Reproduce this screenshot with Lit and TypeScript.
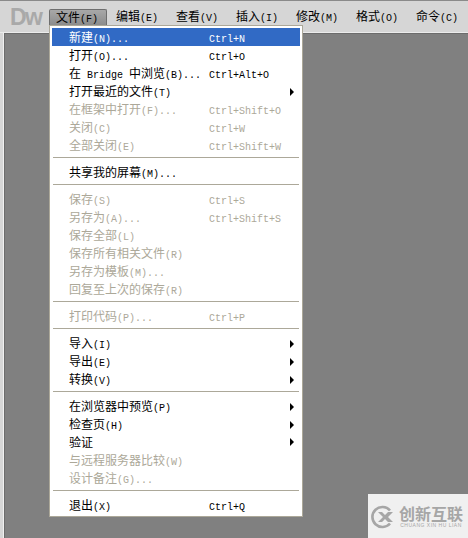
import { LitElement, html, css } from "lit";
import { customElement } from "lit/decorators.js";

type Row = { t: string; k?: string; dis?: boolean; sub?: boolean; on?: boolean } | "sep";

const ROWS: Row[] = [
  { t: "新建(N)...", k: "Ctrl+N", on: true },
  { t: "打开(O)...", k: "Ctrl+O" },
  { t: "在 Bridge 中浏览(B)...", k: "Ctrl+Alt+O" },
  { t: "打开最近的文件(T)", sub: true },
  { t: "在框架中打开(F)...", k: "Ctrl+Shift+O", dis: true },
  { t: "关闭(C)", k: "Ctrl+W", dis: true },
  { t: "全部关闭(E)", k: "Ctrl+Shift+W", dis: true },
  "sep",
  { t: "共享我的屏幕(M)..." },
  "sep",
  { t: "保存(S)", k: "Ctrl+S", dis: true },
  { t: "另存为(A)...", k: "Ctrl+Shift+S", dis: true },
  { t: "保存全部(L)", dis: true },
  { t: "保存所有相关文件(R)", dis: true },
  { t: "另存为模板(M)...", dis: true },
  { t: "回复至上次的保存(R)", dis: true },
  "sep",
  { t: "打印代码(P)...", k: "Ctrl+P", dis: true },
  "sep",
  { t: "导入(I)", sub: true },
  { t: "导出(E)", sub: true },
  { t: "转换(V)", sub: true },
  "sep",
  { t: "在浏览器中预览(P)", sub: true },
  { t: "检查页(H)", sub: true },
  { t: "验证", sub: true },
  { t: "与远程服务器比较(W)", dis: true },
  { t: "设计备注(G)...", dis: true },
  "sep",
  { t: "退出(X)", k: "Ctrl+Q" },
];

const BAR = ["文件(F)", "编辑(E)", "查看(V)", "插入(I)", "修改(M)", "格式(O)", "命令(C)"];

function rich(s: string) {
  return s.split(/([\x20-\x7e]+)/).filter(Boolean).map((p) =>
    /^[\x20-\x7e]/.test(p) ? html`<span class="lat">${p}</span>` : p
  );
}

@customElement("app-root")
export class AppRoot extends LitElement {
  static styles = css`
    :host {
      display: block;
      width: 468px;
      height: 538px;
      overflow: hidden;
      position: relative;
      background: #808080;
      font-family: "Noto Sans CJK SC", sans-serif;
      font-size: 12px;
      color: #000;
    }
    .lat {
      font-family: "Liberation Mono", monospace;
      font-size: 10px;
      white-space: pre;
    }
    .bar {
      height: 33px;
      box-sizing: border-box;
      background: #d6d6d6;
      border-top: 1px solid #8a8a8a;
      border-bottom: 1px solid #ececec;
      display: flex;
      padding-top: 8px;
    }
    .logo {
      width: 49px;
      height: 17px;
      line-height: 17px;
      padding-left: 10px;
      box-sizing: border-box;
      font-family: "Liberation Sans", sans-serif;
      font-weight: 700;
      font-size: 23px;
      letter-spacing: -1.5px;
      color: #a9a9a9;
      flex: none;
    }
    .bar-item {
      flex: none;
      width: 60px;
      height: 16px;
      line-height: 13px;
      padding-left: 7px;
      box-sizing: border-box;
      white-space: nowrap;
    }
    .bar-item.active {
      width: 58px;
      margin-right: 2px;
      height: 16px;
      background: linear-gradient(#a8a8a8, #8c8c8c);
      border: 1px solid #6e6e6e;
      border-bottom: none;
      padding-left: 6px;
      border-radius: 2px 2px 0 0;
    }
    .main {
      height: 505px;
      display: flex;
    }
    .strip {
      flex: none;
      width: 4px;
      box-sizing: border-box;
      background: #d6d6d6;
      border-right: 1px solid #f0f0f0;
    }
    .content {
      flex: 1;
      background: #808080;
      border-top: 1px solid #6c6c6c;
      border-left: 1px solid #6c6c6c;
    }
    .menu {
      position: absolute;
      left: 49px;
      top: 25px;
      width: 254px;
      height: 492px;
      box-sizing: border-box;
      background: #fff;
      border: 1px solid #aca899;
      padding: 2px;
    }
    .row {
      height: 18px;
      line-height: 17px;
      display: grid;
      grid-template-columns: 17px 140px 81px 1fr;
      white-space: nowrap;
    }
    .row .label {
      grid-column: 2;
    }
    .row.on {
      background: #316ac5;
      color: #fff;
    }
    .row.dis {
      color: #aca899;
    }
    .key {
      grid-column: 3;
    }
    .arrow {
      grid-column: 4;
      align-self: center;
      justify-self: start;
      width: 0;
      height: 0;
      margin-top: -1px;
      border-left: 4px solid #000;
      border-top: 4px solid transparent;
      border-bottom: 4px solid transparent;
    }
    .sep {
      height: 9px;
      padding: 3px 1px 0;
      box-sizing: border-box;
    }
    .sep div {
      height: 1px;
      background: #aca899;
    }
    .mark {
      position: absolute;
      left: 368px;
      top: 494px;
      width: 100px;
      height: 44px;
      background: rgba(245, 245, 245, 0.95);
      display: flex;
      align-items: center;
      gap: 4px;
      padding: 2px 0 0 3px;
      box-sizing: border-box;
      color: #a6a6a6;
    }
    .mark svg {
      flex: none;
    }
    .mark-text {
      display: flex;
      flex-direction: column;
      align-items: center;
      gap: 2px;
      font-weight: 700;
      font-size: 16px;
      line-height: 15px;
      white-space: nowrap;
    }
    .mark-sub {
      font-family: "Liberation Sans", sans-serif;
      font-size: 5px;
      line-height: 5px;
      font-weight: 400;
      letter-spacing: 0.5px;
    }
  `;

  render() {
    return html`
      <div class="bar">
        <div class="logo">Dw</div>
        ${BAR.map(
          (b, i) => html`<div class="bar-item ${i === 0 ? "active" : ""}">${rich(b)}</div>`
        )}
      </div>
      <div class="main">
        <div class="strip"></div>
        <div class="content"></div>
      </div>
      <div class="menu">
        ${ROWS.map((r) =>
          r === "sep"
            ? html`<div class="sep"><div></div></div>`
            : html`<div class="row ${r.on ? "on" : ""} ${r.dis ? "dis" : ""}">
                <span class="label">${rich(r.t)}</span>
                ${r.k ? html`<span class="key">${rich(r.k)}</span>` : ""}
                ${r.sub ? html`<span class="arrow"></span>` : ""}
              </div>`
        )}
      </div>
      <div class="mark">
        <svg width="24" height="24" viewBox="0 0 24 24" fill="none">
          <path d="M19 5.5A10 10 0 1 0 19 18.5" stroke="#a6a6a6" stroke-width="2.6" />
          <path d="M7 7l5 5-5 5h4l3-3 3 3h5l-5-5 5-5h-5l-3 3-3-3z" fill="#a6a6a6" />
        </svg>
        <div class="mark-text">
          <span>创新互联</span>
          <span class="mark-sub">CHUANG XIN HU LIAN</span>
        </div>
      </div>
    `;
  }
}
